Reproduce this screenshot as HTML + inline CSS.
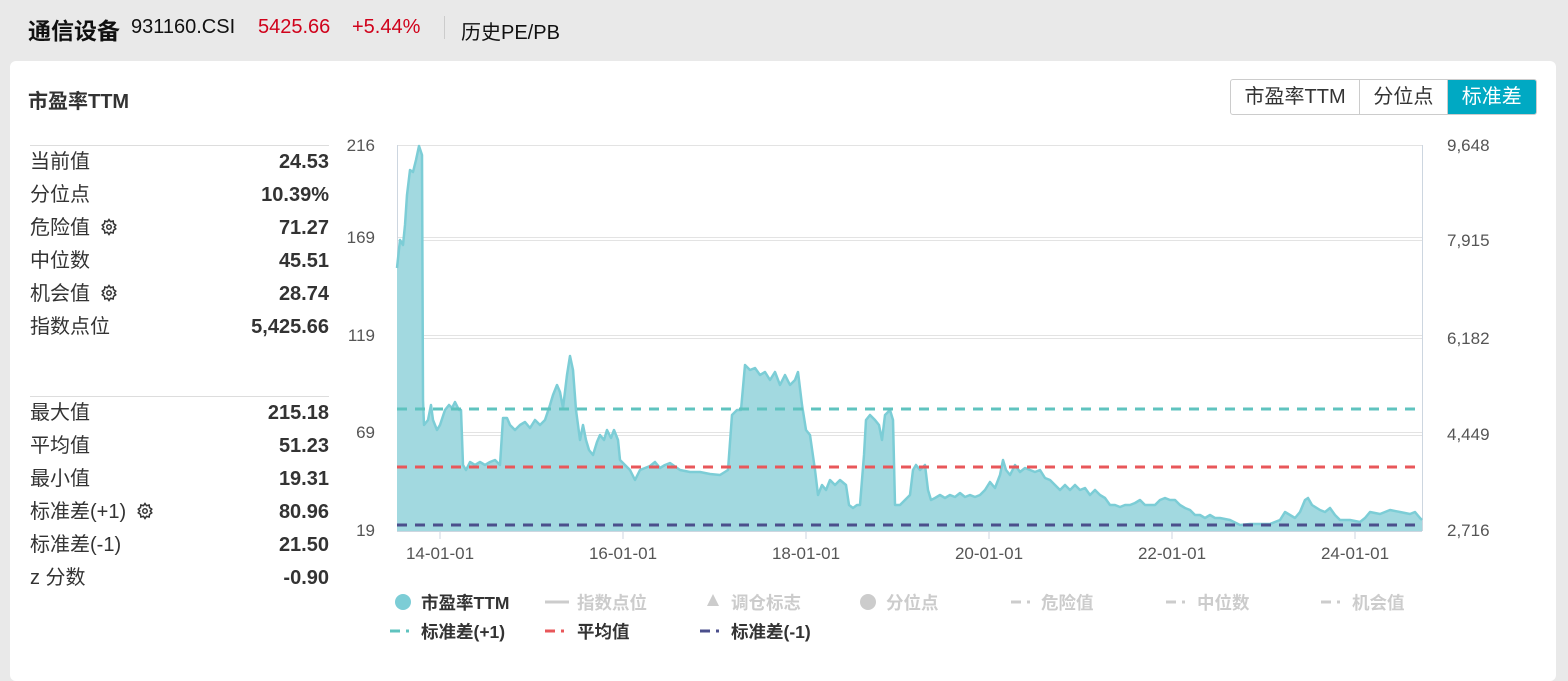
<!DOCTYPE html>
<html><head><meta charset="utf-8"><style>
*{margin:0;padding:0;box-sizing:border-box}
body{width:1568px;height:669px;background:#e9e9e9;font-family:"Liberation Sans","Noto Sans CJK SC",sans-serif;color:#333;position:relative;overflow:hidden}
.a{position:absolute;white-space:nowrap}
.card{position:absolute;left:10px;top:61px;width:1546px;height:620px;background:#fff;border-radius:6px}
.row{position:absolute;left:30px;width:299px;font-size:20px;height:24px;line-height:24px}
.row b{position:absolute;right:0;font-weight:bold}
.gear{display:inline-block;vertical-align:-2px;margin-left:10px}
.btns{position:absolute;left:1230px;top:79px;width:307px;height:36px;display:flex;border:1px solid #ccc;border-radius:3px;overflow:hidden;font-size:20px}
.btns div{text-align:center;line-height:34px;border-right:1px solid #ccc}
.btns div.on{background:#00a9c3;color:#fff;border:none}
</style></head><body>
<div class="a" style="left:28px;top:12px;font-size:23px;font-weight:bold;color:#111">通信设备</div>
<div class="a" style="left:131px;top:16px;font-size:20px;color:#111">931160.CSI</div>
<div class="a" style="left:258px;top:16px;font-size:20px;color:#d0021b">5425.66</div>
<div class="a" style="left:352px;top:16px;font-size:20px;color:#d0021b">+5.44%</div>
<div class="a" style="left:444px;top:16px;width:1px;height:23px;background:#ccc"></div>
<div class="a" style="left:461px;top:16px;font-size:20px;color:#111">历史PE/PB</div>
<div class="card"></div>
<div class="a" style="left:28px;top:85px;font-size:20px;font-weight:bold">市盈率TTM</div>
<div class="btns"><div style="width:130px">市盈率TTM</div><div style="width:88px">分位点</div><div class="on" style="width:89px">标准差</div></div>
<div class="a" style="left:30px;top:145px;width:299px;height:1px;background:#ddd"></div>
<div class="a" style="left:30px;top:396px;width:299px;height:1px;background:#ddd"></div>
<div class="row" style="top:150px">当前值<b>24.53</b></div>
<div class="row" style="top:183px">分位点<b>10.39%</b></div>
<div class="row" style="top:216px">危险值<svg class="gear" width="18" height="18" viewBox="0 0 24 24" fill="none" stroke="#333" stroke-width="2"><circle cx="12" cy="12" r="3"/><path d="M12 2l2 3 3.5-1 .5 3.5 3 2-2 2.5 2 2.5-3 2-.5 3.5-3.5-1-2 3-2-3-3.5 1-.5-3.5-3-2 2-2.5-2-2.5 3-2 .5-3.5 3.5 1z"/></svg><b>71.27</b></div>
<div class="row" style="top:249px">中位数<b>45.51</b></div>
<div class="row" style="top:282px">机会值<svg class="gear" width="18" height="18" viewBox="0 0 24 24" fill="none" stroke="#333" stroke-width="2"><circle cx="12" cy="12" r="3"/><path d="M12 2l2 3 3.5-1 .5 3.5 3 2-2 2.5 2 2.5-3 2-.5 3.5-3.5-1-2 3-2-3-3.5 1-.5-3.5-3-2 2-2.5-2-2.5 3-2 .5-3.5 3.5 1z"/></svg><b>28.74</b></div>
<div class="row" style="top:315px">指数点位<b>5,425.66</b></div>
<div class="row" style="top:401px">最大值<b>215.18</b></div>
<div class="row" style="top:434px">平均值<b>51.23</b></div>
<div class="row" style="top:467px">最小值<b>19.31</b></div>
<div class="row" style="top:500px">标准差(+1)<svg class="gear" width="18" height="18" viewBox="0 0 24 24" fill="none" stroke="#333" stroke-width="2"><circle cx="12" cy="12" r="3"/><path d="M12 2l2 3 3.5-1 .5 3.5 3 2-2 2.5 2 2.5-3 2-.5 3.5-3.5-1-2 3-2-3-3.5 1-.5-3.5-3-2 2-2.5-2-2.5 3-2 .5-3.5 3.5 1z"/></svg><b>80.96</b></div>
<div class="row" style="top:533px">标准差(-1)<b>21.50</b></div>
<div class="row" style="top:566px">z 分数<b>-0.90</b></div>
<svg class="a" style="left:0;top:0" width="1568" height="669">
<g font-family="Liberation Sans, sans-serif" font-size="17" fill="#555">
<text x="375" y="151" text-anchor="end">216</text><text x="375" y="243" text-anchor="end">169</text>
<text x="375" y="341" text-anchor="end">119</text><text x="375" y="438" text-anchor="end">69</text>
<text x="375" y="536" text-anchor="end">19</text>
<text x="1447" y="151">9,648</text><text x="1447" y="246">7,915</text><text x="1447" y="344">6,182</text>
<text x="1447" y="440">4,449</text><text x="1447" y="536">2,716</text>
<text x="440" y="559" text-anchor="middle">14-01-01</text><text x="623" y="559" text-anchor="middle">16-01-01</text>
<text x="806" y="559" text-anchor="middle">18-01-01</text><text x="989" y="559" text-anchor="middle">20-01-01</text>
<text x="1172" y="559" text-anchor="middle">22-01-01</text><text x="1355" y="559" text-anchor="middle">24-01-01</text>
</g>
<g stroke="#e3e3e3" stroke-width="1"><path d="M397 145.5H1422M397 237.5H1422M397 240.5H1422M397 335.5H1422M397 338.5H1422M397 432.5H1422M397 435.5H1422"/></g>
<path d="M397.5 145V531M1422.5 145V531M397 531.5H1422" stroke="#cdd6e0" fill="none"/>
<g stroke="#cdd6e0"><path d="M440 531v8M623 531v8M806 531v8M989 531v8M1172 531v8M1355 531v8"/></g>
<path d="M397,531 L397,268 400,240 403,245 405,225 407,195 410,170 413,172 416,160 419,146 422,155 423,400 424,425 428,420 431,405 433,420 437,430 440,425 445,410 449,405 452,408 455,402 459,410 461,410 463,465 466,470 470,462 475,465 480,462 485,465 490,462 495,460 500,465 503,418 507,418 510,425 515,430 520,425 525,422 530,428 535,420 540,425 545,420 550,405 553,395 557,385 560,392 563,408 567,375 570,356 573,370 576,410 580,440 583,425 586,440 589,450 593,455 597,442 600,435 604,440 607,430 611,438 614,430 618,440 620,460 625,465 630,470 635,480 640,470 645,468 650,466 655,462 660,468 665,465 670,463 680,470 690,472 700,472 710,474 720,475 728,470 732,415 737,410 741,410 745,365 750,370 755,368 760,375 765,372 770,380 775,372 780,385 785,375 790,385 795,380 798,372 802,405 806,430 810,435 815,470 818,495 822,485 826,490 830,480 835,485 840,480 846,485 849,505 853,508 857,505 860,505 864,455 866,420 870,415 875,420 879,425 882,440 885,415 890,410 893,420 895,505 900,505 905,500 910,495 913,470 916,465 920,470 925,465 928,490 931,500 935,498 940,495 945,498 950,495 955,497 960,493 965,497 970,495 975,497 980,495 985,490 990,482 995,488 1000,475 1003,460 1006,470 1010,475 1015,465 1020,472 1025,468 1030,470 1035,472 1040,470 1045,478 1050,480 1055,485 1060,490 1065,485 1070,490 1075,485 1080,490 1085,488 1090,495 1095,490 1100,495 1105,498 1110,505 1115,505 1120,507 1125,505 1130,505 1135,503 1140,500 1145,505 1150,505 1155,505 1160,500 1165,498 1170,500 1175,500 1180,505 1185,508 1190,510 1195,515 1200,515 1205,518 1210,515 1215,518 1220,518 1230,520 1240,525 1250,524 1260,524 1270,524 1280,520 1285,512 1290,515 1295,518 1300,512 1305,500 1308,498 1312,505 1320,510 1325,512 1330,508 1335,515 1340,520 1350,520 1360,522 1365,518 1370,512 1380,514 1390,510 1400,512 1410,514 1415,512 1420,518 1422,520 1422,531Z" fill="#a2d9e0"/>
<path d="M397,268 L400,240 403,245 405,225 407,195 410,170 413,172 416,160 419,146 422,155 423,400 424,425 428,420 431,405 433,420 437,430 440,425 445,410 449,405 452,408 455,402 459,410 461,410 463,465 466,470 470,462 475,465 480,462 485,465 490,462 495,460 500,465 503,418 507,418 510,425 515,430 520,425 525,422 530,428 535,420 540,425 545,420 550,405 553,395 557,385 560,392 563,408 567,375 570,356 573,370 576,410 580,440 583,425 586,440 589,450 593,455 597,442 600,435 604,440 607,430 611,438 614,430 618,440 620,460 625,465 630,470 635,480 640,470 645,468 650,466 655,462 660,468 665,465 670,463 680,470 690,472 700,472 710,474 720,475 728,470 732,415 737,410 741,410 745,365 750,370 755,368 760,375 765,372 770,380 775,372 780,385 785,375 790,385 795,380 798,372 802,405 806,430 810,435 815,470 818,495 822,485 826,490 830,480 835,485 840,480 846,485 849,505 853,508 857,505 860,505 864,455 866,420 870,415 875,420 879,425 882,440 885,415 890,410 893,420 895,505 900,505 905,500 910,495 913,470 916,465 920,470 925,465 928,490 931,500 935,498 940,495 945,498 950,495 955,497 960,493 965,497 970,495 975,497 980,495 985,490 990,482 995,488 1000,475 1003,460 1006,470 1010,475 1015,465 1020,472 1025,468 1030,470 1035,472 1040,470 1045,478 1050,480 1055,485 1060,490 1065,485 1070,490 1075,485 1080,490 1085,488 1090,495 1095,490 1100,495 1105,498 1110,505 1115,505 1120,507 1125,505 1130,505 1135,503 1140,500 1145,505 1150,505 1155,505 1160,500 1165,498 1170,500 1175,500 1180,505 1185,508 1190,510 1195,515 1200,515 1205,518 1210,515 1215,518 1220,518 1230,520 1240,525 1250,524 1260,524 1270,524 1280,520 1285,512 1290,515 1295,518 1300,512 1305,500 1308,498 1312,505 1320,510 1325,512 1330,508 1335,515 1340,520 1350,520 1360,522 1365,518 1370,512 1380,514 1390,510 1400,512 1410,514 1415,512 1420,518 1422,520" fill="none" stroke="#7ccdd6" stroke-width="2.5" stroke-linejoin="round"/>
<g stroke-width="3" stroke-dasharray="10 8" fill="none">
<path d="M397 409H1422" stroke="#5fc3bf"/><path d="M397 467H1422" stroke="#e8575a"/><path d="M397 525H1422" stroke="#4b4f8c"/></g>
<g font-family="Liberation Sans, Noto Sans CJK SC, sans-serif" font-size="17.5" font-weight="bold" fill="#ccc">
<circle cx="403" cy="602" r="8" fill="#7ccdd6"/><text x="421" y="609" fill="#333">市盈率TTM</text>
<path d="M545 602h24" stroke="#ccc" stroke-width="3"/><text x="577" y="609">指数点位</text>
<path d="M713 594l6 12h-12z" fill="#ccc"/><text x="731" y="609">调仓标志</text>
<circle cx="868" cy="602" r="8" fill="#ccc"/><text x="886" y="609">分位点</text>
<path d="M1011 602h10M1027 602h3" stroke="#ccc" stroke-width="3"/><text x="1041" y="609">危险值</text>
<path d="M1166 602h10M1182 602h3" stroke="#ccc" stroke-width="3"/><text x="1197" y="609">中位数</text>
<path d="M1321 602h10M1337 602h3" stroke="#ccc" stroke-width="3"/><text x="1352" y="609">机会值</text>
<path d="M390 631h10M406 631h3" stroke="#5fc3bf" stroke-width="3"/><text x="421" y="638" fill="#333">标准差(+1)</text>
<path d="M545 631h10M561 631h3" stroke="#e8575a" stroke-width="3"/><text x="577" y="638" fill="#333">平均值</text>
<path d="M700 631h10M716 631h3" stroke="#4b4f8c" stroke-width="3"/><text x="731" y="638" fill="#333">标准差(-1)</text>
</g>
</svg>
</body></html>
